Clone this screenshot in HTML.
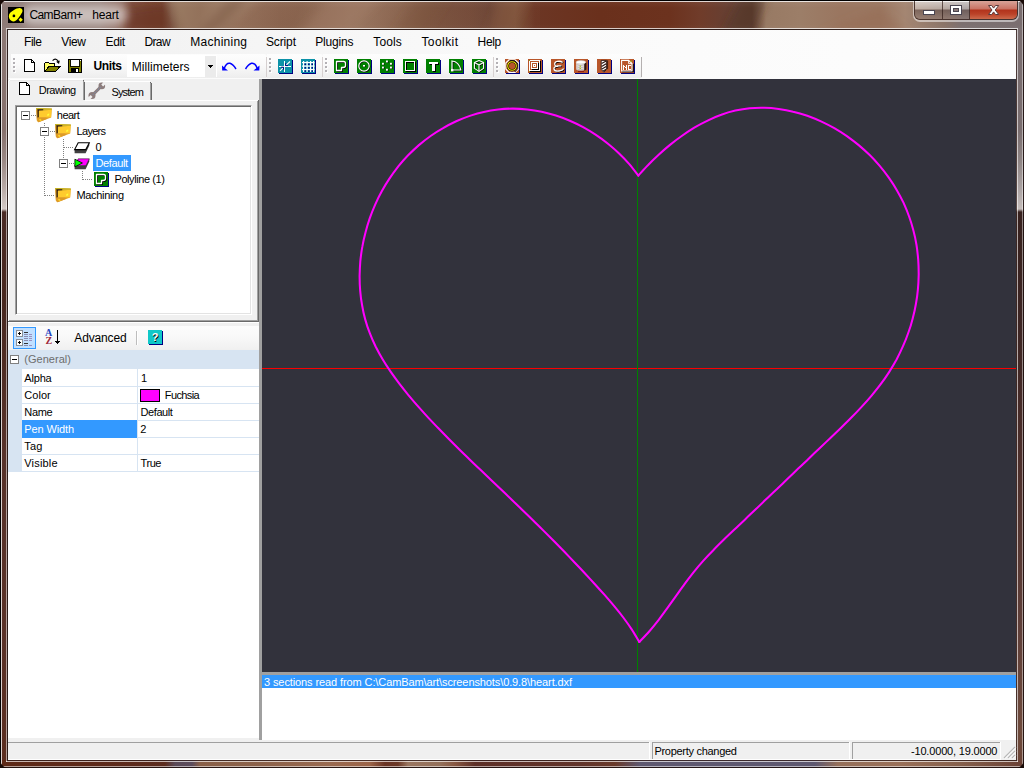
<!DOCTYPE html>
<html><head><meta charset="utf-8"><title>CamBam+ heart</title>
<style>
html,body{margin:0;padding:0;}
body{width:1024px;height:768px;overflow:hidden;background:#000;position:relative;font-family:'Liberation Sans',sans-serif;}
.a{position:absolute;}
.t{position:absolute;white-space:pre;font-family:'Liberation Sans',sans-serif;}
svg{position:absolute;overflow:visible;}

</style></head><body>
<div class="a" style="left:0px;top:0px;width:1024px;height:30px;background:linear-gradient(90deg,#8e7a76 0px,#917d78 20px,#937d76 100px,#8e6a5e 122px,#7a4a3a 132px,#74412e 150px,#72402c 162px,#886450 172px,#8e6c54 180px,#86604a 200px,#8f6b55 215px,#8c6650 280px,#94705a 350px,#8a644e 400px,#7c5440 440px,#744a38 470px,#6a4232 490px,#7a5038 515px,#6c3624 535px,#6a301c 600px,#6c321e 670px,#703c2a 700px,#644034 735px,#5e3c30 752px,#987a64 766px,#9c7e68 800px,#9a7660 840px,#9a7660 880px,#a48672 905px,#8a7468 945px,#7c7070 962px,#7a6e70 1024px);"></div>
<div class="a" style="left:160px;top:0px;width:380px;height:30px;background:linear-gradient(115deg,rgba(255,235,220,0) 0,rgba(60,20,10,.10) 40px,rgba(255,235,220,.05) 80px,rgba(60,20,10,.06) 130px,rgba(255,235,220,.06) 190px,rgba(60,20,10,.05) 250px,rgba(255,235,220,.04) 310px,rgba(0,0,0,0) 380px);"></div>
<div class="a" style="left:2px;top:2px;width:1020px;height:26px;overflow:hidden"><svg style="left:-2px;top:-2px" width="1024" height="30" viewBox="0 0 1024 30"><defs><filter id="tb" x="-10%" y="-50%" width="120%" height="200%"><feGaussianBlur stdDeviation="4"/></filter></defs><g filter="url(#tb)"><path d="M168 -4H262L218 34H182Z" fill="#a4866e" opacity=".55"/><path d="M122 12L166 6L176 34H124Z" fill="#6a3222" opacity=".5"/><path d="M196 34L232 -4H252L214 34Z" fill="#74503c" opacity=".4"/><path d="M330 -4H384L344 34H300Z" fill="#a27e66" opacity=".4"/><path d="M420 -4H450L425 34H392Z" fill="#7a5440" opacity=".35"/><path d="M500 -4H530L512 34H486Z" fill="#86583e" opacity=".4"/><path d="M742 -4H768L752 34H722Z" fill="#4e3028" opacity=".45"/><path d="M820 34L880 8L910 34Z" fill="#966a52" opacity=".45"/></g></svg></div>
<div class="a" style="left:22px;top:5px;width:106px;height:20px;border-radius:10px;background:rgba(255,255,255,.50);filter:blur(4px)"></div>
<div class="a" style="left:0px;top:0px;width:1024px;height:30px;background:linear-gradient(180deg,rgba(255,255,255,.06) 0,rgba(255,255,255,0) 8px,rgba(0,0,0,0) 24px,rgba(255,255,255,.03) 30px);"></div>
<div class="a" style="left:0px;top:30px;width:8px;height:738px;background:linear-gradient(180deg,#8c7874 0,#86706c 100px,#9a8884 130px,#b8aaa6 158px,#d4cac6 179px,#4a2a24 182px,#48281f 270px,#57322a 420px,#5a3228 600px,#5c2e20 738px);"></div>
<div class="a" style="left:1016px;top:30px;width:8px;height:738px;background:linear-gradient(180deg,#7a6e70 0,#7a6e70 100px,#8e8484 130px,#aaa2a2 158px,#c4bcba 179px,#38221f 182px,#3e2624 300px,#4e302c 440px,#60403a 600px,#6e4a3c 700px,#6a4436 738px);"></div>
<div class="a" style="left:0px;top:760px;width:1024px;height:8px;background:linear-gradient(90deg,#5e2a18 0,#5e2a1a 100px,#5c2c1e 165px,#5a4a58 175px,#5c4c5c 192px,#8a6048 200px,#8c624a 260px,#9a6a50 330px,#9c6448 370px,#6a3424 385px,#6c3826 398px,#9a7660 408px,#94705a 440px,#885842 455px,#5e3028 475px,#62342a 580px,#6a3a2a 615px,#5e5870 640px,#5e5870 815px,#96705a 838px,#9a7058 900px,#86604c 960px,#6a4034 1024px);"></div>
<div class="a" style="left:0px;top:0px;width:1024px;height:1px;background:#000;"></div>
<div class="a" style="left:1px;top:1px;width:1022px;height:1px;background:rgba(255,255,255,.78);"></div>
<div class="a" style="left:0px;top:0px;width:1px;height:768px;background:#000;"></div>
<div class="a" style="left:1px;top:1px;width:1px;height:766px;background:rgba(255,255,255,.78);"></div>
<div class="a" style="left:1023px;top:0px;width:1px;height:768px;background:rgba(30,16,14,.9);"></div>
<div class="a" style="left:1022px;top:1px;width:1px;height:766px;background:rgba(255,255,255,.45);"></div>
<div class="a" style="left:0px;top:767px;width:1024px;height:1px;background:rgba(30,16,14,.9);"></div>
<div class="a" style="left:1px;top:766px;width:1022px;height:1px;background:rgba(255,255,255,.55);"></div>
<div class="a" style="left:6px;top:28px;width:1012px;height:1px;background:rgba(255,255,255,.75);"></div>
<div class="a" style="left:7px;top:29px;width:1010px;height:1px;background:rgba(40,26,24,.92);"></div>
<div class="a" style="left:6px;top:29px;width:1px;height:733px;background:rgba(255,255,255,.54);"></div>
<div class="a" style="left:7px;top:30px;width:1px;height:731px;background:rgba(40,26,24,.92);"></div>
<div class="a" style="left:1017px;top:29px;width:1px;height:733px;background:rgba(255,255,255,.6);"></div>
<div class="a" style="left:1016px;top:30px;width:1px;height:731px;background:rgba(60,40,36,.75);"></div>
<div class="a" style="left:6px;top:761px;width:1012px;height:1px;background:rgba(255,255,255,.65);"></div>
<div class="a" style="left:7px;top:760px;width:1010px;height:1px;background:rgba(50,30,28,.8);"></div>
<svg class="a" style="left:0;top:0" width="1024" height="768" viewBox="0 0 1024 768"><path d="M0 0H7Q2 1 0 7Z M1024 0H1017Q1022 1 1024 7Z M0 768H7Q2 767 0 761Z M1024 768H1017Q1022 767 1024 761Z" fill="#180a06"/></svg>
<div class="a" style="left:8px;top:30px;width:1008px;height:730px;background:#f0f0f0;"></div>
<div class="a" style="left:8px;top:30px;width:1008px;height:49px;background:linear-gradient(90deg,#efefef 0,#f4f4f4 200px,#fafafa 520px,#fdfdfd 1008px);"></div>
<div class="a" style="left:914px;top:1px;width:104px;height:19px;border-radius:0 0 6px 6px;border:1px solid rgba(50,30,26,.75);border-top:none;box-sizing:border-box;box-shadow:0 1px 0 1px rgba(255,255,255,.5);overflow:hidden">
<div class="a" style="left:0;top:0;width:27px;height:18px;background:linear-gradient(180deg,rgba(255,255,255,.60) 0,rgba(255,255,255,.36) 8px,rgba(100,80,76,.55) 9px,rgba(150,128,120,.5) 18px);border-right:1px solid rgba(50,30,26,.7)"></div>
<div class="a" style="left:28px;top:0;width:26px;height:18px;background:linear-gradient(180deg,rgba(255,255,255,.60) 0,rgba(255,255,255,.36) 8px,rgba(100,80,76,.55) 9px,rgba(150,128,120,.5) 18px);border-right:1px solid rgba(50,30,26,.7)"></div>
<div class="a" style="left:55px;top:0;width:48px;height:18px;background:linear-gradient(180deg,#d8a398 0,#c97263 8px,#b2331c 9px,#bb4228 13px,#cc6a4c 18px)"></div>
</div>
<svg class="a" style="left:914px;top:0" width="104" height="20" viewBox="0 0 104 20" shape-rendering="crispEdges">
<rect x="9.5" y="10.5" width="11" height="4" fill="#fff" stroke="#4a4652" stroke-width="1"/>
<rect x="36.5" y="5.5" width="11" height="9" fill="#fff" stroke="#4a4652" stroke-width="1"/>
<rect x="39.5" y="8.5" width="5" height="3" fill="#8a7a78" stroke="#4a4652" stroke-width="1"/>
<g shape-rendering="auto"><path d="M74.5 5.5h3.2l1.9 2.6 1.9-2.6h3.2l-3.5 4.5 3.5 4.5h-3.2l-1.9-2.6-1.9 2.6h-3.2l3.5-4.5z" fill="#fff" stroke="#5a3a3a" stroke-width="1" stroke-linejoin="round"/></g>
</svg>
<div class="a" style="left:11px;top:54px;width:256px;height:25px;background:linear-gradient(180deg,#fdfdfd 0,#fafafa 10px,#f1f1f1 20px,#ececec 25px);border-radius:0 3px 3px 0;"></div>
<div class="a" style="left:266px;top:57px;width:1px;height:20px;background:#d6d0d0;"></div>
<div class="a" style="left:14px;top:59px;width:2px;height:2px;background:#fff;"></div>
<div class="a" style="left:13px;top:58px;width:2px;height:2px;background:#b3b0b4;"></div>
<div class="a" style="left:14px;top:63px;width:2px;height:2px;background:#fff;"></div>
<div class="a" style="left:13px;top:62px;width:2px;height:2px;background:#b3b0b4;"></div>
<div class="a" style="left:14px;top:67px;width:2px;height:2px;background:#fff;"></div>
<div class="a" style="left:13px;top:66px;width:2px;height:2px;background:#b3b0b4;"></div>
<div class="a" style="left:14px;top:71px;width:2px;height:2px;background:#fff;"></div>
<div class="a" style="left:13px;top:70px;width:2px;height:2px;background:#b3b0b4;"></div>
<div class="a" style="left:267px;top:54px;width:56px;height:25px;background:linear-gradient(180deg,#fdfdfd 0,#fafafa 10px,#f1f1f1 20px,#ececec 25px);border-radius:0 3px 3px 0;"></div>
<div class="a" style="left:322px;top:57px;width:1px;height:20px;background:#d6d0d0;"></div>
<div class="a" style="left:270px;top:59px;width:2px;height:2px;background:#fff;"></div>
<div class="a" style="left:269px;top:58px;width:2px;height:2px;background:#b3b0b4;"></div>
<div class="a" style="left:270px;top:63px;width:2px;height:2px;background:#fff;"></div>
<div class="a" style="left:269px;top:62px;width:2px;height:2px;background:#b3b0b4;"></div>
<div class="a" style="left:270px;top:67px;width:2px;height:2px;background:#fff;"></div>
<div class="a" style="left:269px;top:66px;width:2px;height:2px;background:#b3b0b4;"></div>
<div class="a" style="left:270px;top:71px;width:2px;height:2px;background:#fff;"></div>
<div class="a" style="left:269px;top:70px;width:2px;height:2px;background:#b3b0b4;"></div>
<div class="a" style="left:323px;top:54px;width:171px;height:25px;background:linear-gradient(180deg,#fdfdfd 0,#fafafa 10px,#f1f1f1 20px,#ececec 25px);border-radius:0 3px 3px 0;"></div>
<div class="a" style="left:493px;top:57px;width:1px;height:20px;background:#d6d0d0;"></div>
<div class="a" style="left:326px;top:59px;width:2px;height:2px;background:#fff;"></div>
<div class="a" style="left:325px;top:58px;width:2px;height:2px;background:#b3b0b4;"></div>
<div class="a" style="left:326px;top:63px;width:2px;height:2px;background:#fff;"></div>
<div class="a" style="left:325px;top:62px;width:2px;height:2px;background:#b3b0b4;"></div>
<div class="a" style="left:326px;top:67px;width:2px;height:2px;background:#fff;"></div>
<div class="a" style="left:325px;top:66px;width:2px;height:2px;background:#b3b0b4;"></div>
<div class="a" style="left:326px;top:71px;width:2px;height:2px;background:#fff;"></div>
<div class="a" style="left:325px;top:70px;width:2px;height:2px;background:#b3b0b4;"></div>
<div class="a" style="left:494px;top:54px;width:148px;height:25px;background:linear-gradient(180deg,#fdfdfd 0,#fafafa 10px,#f1f1f1 20px,#ececec 25px);border-radius:0 3px 3px 0;"></div>
<div class="a" style="left:641px;top:57px;width:1px;height:20px;background:#d6d0d0;"></div>
<div class="a" style="left:497px;top:59px;width:2px;height:2px;background:#fff;"></div>
<div class="a" style="left:496px;top:58px;width:2px;height:2px;background:#b3b0b4;"></div>
<div class="a" style="left:497px;top:63px;width:2px;height:2px;background:#fff;"></div>
<div class="a" style="left:496px;top:62px;width:2px;height:2px;background:#b3b0b4;"></div>
<div class="a" style="left:497px;top:67px;width:2px;height:2px;background:#fff;"></div>
<div class="a" style="left:496px;top:66px;width:2px;height:2px;background:#b3b0b4;"></div>
<div class="a" style="left:497px;top:71px;width:2px;height:2px;background:#fff;"></div>
<div class="a" style="left:496px;top:70px;width:2px;height:2px;background:#b3b0b4;"></div>
<div class="a" style="left:641px;top:57px;width:1px;height:20px;background:#b4b0b0;"></div>
<div class="a" style="left:8px;top:78px;width:1008px;height:1px;background:#fbfbfb;"></div>
<div class="a" style="left:127px;top:55px;width:90px;height:22px;background:#fff;"></div>
<div class="a" style="left:205px;top:56px;width:11px;height:21px;background:#ebebeb;"></div>
<svg style="left:208px;top:65px" width="5" height="3" shape-rendering="crispEdges"><path d="M0 0h5v1h-1v1h-1v1h-1v-1h-1v-1h-1z" fill="#000"/></svg>
<svg style="left:24px;top:59px" width="12" height="14" viewBox="0 0 12 14" shape-rendering="crispEdges"><path d="M0.5 0.5H7.5L10.5 3.5V12.5H0.5Z" fill="#fff" stroke="#000"/><path d="M7.5 0.5V3.5H10.5" fill="none" stroke="#000"/></svg>
<svg style="left:44px;top:58px" width="17" height="15" viewBox="0 0 17 15" shape-rendering="crispEdges"><path d="M0.5 13.5V5.5L1.5 4.5H4.5L5.5 5.5H10.5V8.5" fill="#ffff66" stroke="#000"/><path d="M0.5 13.5L5 8.5H16L11.5 13.5Z" fill="#808000" stroke="#000" stroke-linejoin="miter"/><g shape-rendering="auto"><path d="M8.6 2.6Q10.4 0.6 12.4 1.4T14.3 4.4" fill="none" stroke="#000" stroke-width="1.1"/><path d="M12.2 3.8L15.8 2.4L15 6Z" fill="#000"/></g></svg>
<svg style="left:68px;top:59px" width="14" height="14" viewBox="0 0 14 14" shape-rendering="crispEdges"><rect x="0.5" y="0.5" width="13" height="13" fill="#808000" stroke="#000"/><rect x="3" y="1" width="8" height="6" fill="#fff"/><rect x="2.5" y="0.5" width="9" height="7" fill="none" stroke="#000" stroke-opacity=".85"/><rect x="3" y="9" width="8" height="5" fill="#000"/><rect x="8" y="10" width="2" height="3" fill="#fff"/><rect x="12" y="1" width="1" height="1" fill="#fff"/></svg>
<svg style="left:222px;top:61.5px" width="15" height="9" viewBox="0 0 15 9"><g shape-rendering="auto"><path d="M2.2 6.6Q4.2 0.6 8 1.3Q11 2.2 14 7" fill="none" stroke="#0000ff" stroke-width="1.45"/><path d="M0 3.4L0.2 8.4H6L3.4 6.4Z" fill="#0000ff"/></g></svg>
<svg style="left:245px;top:61.5px" width="15" height="9" viewBox="0 0 15 9"><g transform="translate(14.5,0) scale(-1,1)"><g shape-rendering="auto"><path d="M2.2 6.6Q4.2 0.6 8 1.3Q11 2.2 14 7" fill="none" stroke="#0000ff" stroke-width="1.45"/><path d="M0 3.4L0.2 8.4H6L3.4 6.4Z" fill="#0000ff"/></g></g></svg>
<svg style="left:278px;top:59px" width="16" height="16" viewBox="0 0 16 16" shape-rendering="crispEdges"><rect x="1" y="1" width="14" height="14" fill="#000080"/><rect x="0" y="0" width="14" height="14" fill="#0c92a8"/><rect x="6" y="2" width="1" height="11" fill="#fff"/><rect x="1" y="7" width="12" height="1" fill="#fff"/><g shape-rendering="auto"><path d="M12 2.5L8.2 6.2" stroke="#fff" stroke-width="1.1"/><path d="M2 11.8L5 8.8" stroke="#fff" stroke-width="1.1"/><path d="M7.6 4.2V6.6H10" stroke="#000080" stroke-width="1" fill="none"/><path d="M3.2 8.2H5.6V10.6" stroke="#000080" stroke-width="1" fill="none"/></g></svg>
<svg style="left:301px;top:59px" width="16" height="16" viewBox="0 0 16 16" shape-rendering="crispEdges"><rect x="1" y="1" width="14" height="14" fill="#000080"/><rect x="0" y="0" width="14" height="14" fill="#0c92a8"/><rect x="2" y="2" width="1.2" height="11" fill="#fff" shape-rendering="auto"/><rect x="5.5" y="2" width="1.2" height="11" fill="#fff" shape-rendering="auto"/><rect x="9" y="2" width="1.2" height="11" fill="#fff" shape-rendering="auto"/><rect x="12" y="2" width="1.2" height="11" fill="#fff" shape-rendering="auto"/><rect x="1" y="3" width="12.5" height="1.2" fill="#fff" shape-rendering="auto"/><rect x="1" y="6.5" width="12.5" height="1.2" fill="#fff" shape-rendering="auto"/><rect x="1" y="10" width="12.5" height="1.2" fill="#fff" shape-rendering="auto"/><rect x="3.6" y="4.6" width="1.4" height="1.4" fill="#000080" shape-rendering="auto"/><rect x="3.6" y="8.1" width="1.4" height="1.4" fill="#000080" shape-rendering="auto"/><rect x="3.6" y="11.4" width="1.4" height="1.4" fill="#000080" shape-rendering="auto"/><rect x="7.1" y="4.6" width="1.4" height="1.4" fill="#000080" shape-rendering="auto"/><rect x="7.1" y="8.1" width="1.4" height="1.4" fill="#000080" shape-rendering="auto"/><rect x="7.1" y="11.4" width="1.4" height="1.4" fill="#000080" shape-rendering="auto"/><rect x="10.6" y="4.6" width="1.4" height="1.4" fill="#000080" shape-rendering="auto"/><rect x="10.6" y="8.1" width="1.4" height="1.4" fill="#000080" shape-rendering="auto"/><rect x="10.6" y="11.4" width="1.4" height="1.4" fill="#000080" shape-rendering="auto"/></svg>
<svg style="left:334px;top:59px" width="16" height="16" viewBox="0 0 16 16" shape-rendering="crispEdges"><rect x="1" y="1" width="14" height="14" fill="#000080"/><rect x="0" y="0" width="14" height="14" fill="#008000"/><g shape-rendering="auto"><g transform="translate(.8,.8)"><path d="M2.5 2.5H9.5Q11.5 2.5 11.5 4.5V6.5Q11.5 8.5 9 8.5H7.5V11.5H2.5Z" fill="none" stroke="#000" stroke-width="1.3" stroke-linejoin="round"/></g><path d="M2.5 2.5H9.5Q11.5 2.5 11.5 4.5V6.5Q11.5 8.5 9 8.5H7.5V11.5H2.5Z" fill="none" stroke="#fff" stroke-width="1.3" stroke-linejoin="round"/></g></svg>
<svg style="left:357px;top:59px" width="16" height="16" viewBox="0 0 16 16" shape-rendering="crispEdges"><rect x="1" y="1" width="14" height="14" fill="#000080"/><rect x="0" y="0" width="14" height="14" fill="#008000"/><g shape-rendering="auto"><circle cx="7.6" cy="7.6" r="5.2" fill="none" stroke="#000" stroke-width="1.1"/><circle cx="7" cy="7" r="5.2" fill="none" stroke="#fff" stroke-width="1.2"/><rect x="6.4" y="6.4" width="2" height="1.6" fill="#000"/><rect x="6" y="6" width="2" height="1.6" fill="#fff"/></g></svg>
<svg style="left:380px;top:59px" width="16" height="16" viewBox="0 0 16 16" shape-rendering="crispEdges"><rect x="1" y="1" width="14" height="14" fill="#000080"/><rect x="0" y="0" width="14" height="14" fill="#008000"/><g shape-rendering="auto"><rect x="6.5" y="2.0" width="1.9" height="1.9" fill="#000"/><rect x="6" y="1.5" width="1.9" height="1.9" fill="#fff"/><rect x="2.5" y="4.3" width="1.9" height="1.9" fill="#000"/><rect x="2" y="3.8" width="1.9" height="1.9" fill="#fff"/><rect x="10.5" y="4.3" width="1.9" height="1.9" fill="#000"/><rect x="10" y="3.8" width="1.9" height="1.9" fill="#fff"/><rect x="2.5" y="8.1" width="1.9" height="1.9" fill="#000"/><rect x="2" y="7.6" width="1.9" height="1.9" fill="#fff"/><rect x="10.5" y="8.1" width="1.9" height="1.9" fill="#000"/><rect x="10" y="7.6" width="1.9" height="1.9" fill="#fff"/><rect x="6.5" y="10.3" width="1.9" height="1.9" fill="#000"/><rect x="6" y="9.8" width="1.9" height="1.9" fill="#fff"/></g></svg>
<svg style="left:403px;top:59px" width="16" height="16" viewBox="0 0 16 16" shape-rendering="crispEdges"><rect x="1" y="1" width="14" height="14" fill="#000080"/><rect x="0" y="0" width="14" height="14" fill="#008000"/><rect x="3.5" y="3.5" width="9" height="9" fill="none" stroke="#000"/><rect x="2.5" y="2.5" width="9" height="9" fill="none" stroke="#fff"/></svg>
<svg style="left:426px;top:59px" width="16" height="16" viewBox="0 0 16 16" shape-rendering="crispEdges"><rect x="1" y="1" width="14" height="14" fill="#000080"/><rect x="0" y="0" width="14" height="14" fill="#008000"/><path d="M4 4h9v2h-3v7h-3v-7h-3z" fill="#000"/><path d="M3 3h9v2h-3v7h-3v-7h-3z" fill="#fff"/></svg>
<svg style="left:449px;top:59px" width="16" height="16" viewBox="0 0 16 16" shape-rendering="crispEdges"><rect x="1" y="1" width="14" height="14" fill="#000080"/><rect x="0" y="0" width="14" height="14" fill="#008000"/><g shape-rendering="auto"><path d="M3.8 11.8V2.8Q10.8 3.4 12.6 11.8Z" fill="none" stroke="#000" stroke-width="1.1"/><path d="M3 11V2Q10 2.6 11.8 11Z" fill="none" stroke="#fff" stroke-width="1.2"/><rect x="2" y="10" width="2.4" height="2.4" fill="#fff"/></g></svg>
<svg style="left:472px;top:59px" width="16" height="16" viewBox="0 0 16 16" shape-rendering="crispEdges"><rect x="1" y="1" width="14" height="14" fill="#000080"/><rect x="0" y="0" width="14" height="14" fill="#008000"/><g shape-rendering="auto" fill="none" stroke-linejoin="round"><g transform="translate(.7,.7)" stroke="#000" stroke-width="1"><path d="M7 1.6L11.6 3.6V9.4L7 12.4L2.4 9.4V3.6Z"/><path d="M2.4 3.6L7 6L11.6 3.6M7 6V12.4"/></g><g stroke="#fff" stroke-width="1.1"><path d="M7 1.6L11.6 3.6V9.4L7 12.4L2.4 9.4V3.6Z"/><path d="M2.4 3.6L7 6L11.6 3.6M7 6V12.4"/></g></g></svg>
<svg style="left:505px;top:59px" width="16" height="16" viewBox="0 0 16 16" shape-rendering="crispEdges"><rect x="1" y="1" width="14" height="14" fill="#000080"/><rect x="0" y="0" width="14" height="14" fill="#b8562a"/><g shape-rendering="auto"><path d="M4 0.8H10L13.4 4V10L10 13.4H4L0.8 10V4Z" fill="none" stroke="#fff" stroke-width="1.2"/><path d="M4.6 1.6H9.6L12.8 4.6V9.6L9.8 13" fill="none" stroke="#000" stroke-width=".9"/><circle cx="7" cy="7" r="4.3" fill="#b8562a" stroke="#000" stroke-width="2.2"/><circle cx="7" cy="7" r="4.3" fill="none" stroke="#ffee00" stroke-width="1.1"/></g></svg>
<svg style="left:528px;top:59px" width="16" height="16" viewBox="0 0 16 16" shape-rendering="crispEdges"><rect x="1" y="1" width="14" height="14" fill="#000080"/><rect x="0" y="0" width="14" height="14" fill="#b8562a"/><rect x="1" y="1" width="11" height="1" fill="#fff"/><rect x="1" y="11" width="11" height="1" fill="#fff"/><rect x="1" y="1" width="1" height="11" fill="#fff"/><rect x="11" y="1" width="1" height="11" fill="#fff"/><rect x="12" y="2" width="1" height="11" fill="#000"/><rect x="2" y="12" width="11" height="1" fill="#000"/><rect x="3" y="3" width="7" height="1" fill="#fff"/><rect x="3" y="9" width="7" height="1" fill="#fff"/><rect x="3" y="3" width="1" height="7" fill="#fff"/><rect x="9" y="3" width="1" height="7" fill="#fff"/><rect x="10" y="4" width="1" height="7" fill="#000"/><rect x="4" y="10" width="7" height="1" fill="#000"/><rect x="5" y="5" width="3" height="1" fill="#fff"/><rect x="5" y="7" width="3" height="1" fill="#fff"/><rect x="5" y="5" width="1" height="3" fill="#fff"/><rect x="7" y="5" width="1" height="3" fill="#fff"/><rect x="1" y="1" width="1" height="1" fill="#8a9a20"/><rect x="1" y="12" width="1" height="1" fill="#8a9a20"/></svg>
<svg style="left:551px;top:59px" width="16" height="16" viewBox="0 0 16 16" shape-rendering="crispEdges"><rect x="1" y="1" width="14" height="14" fill="#000080"/><rect x="0" y="0" width="14" height="14" fill="#b8562a"/><g shape-rendering="auto" fill="none"><path d="M11.6 3.4Q9.6 1.8 6.4 2.4T3.8 5.6T7.4 6.8H10.4M7 6.8Q2.4 7.4 3 10T8 12T12.4 9.6" stroke="#000" stroke-width="1.3" transform="translate(.7,.7)"/><path d="M11.6 3.4Q9.6 1.8 6.4 2.4T3.8 5.6T7.4 6.8H10.4M7 6.8Q2.4 7.4 3 10T8 12T12.4 9.6" stroke="#fff" stroke-width="1.3"/></g></svg>
<svg style="left:574px;top:59px" width="16" height="16" viewBox="0 0 16 16" shape-rendering="crispEdges"><rect x="1" y="1" width="14" height="14" fill="#000080"/><rect x="0" y="0" width="14" height="14" fill="#b8562a"/><g shape-rendering="auto"><path d="M2.2 3.2V10.4Q6.6 13.4 11.6 10.4V3.2Z" fill="#e4e0e0"/><path d="M10.2 3.4H12.4V10.4Q11.4 11.4 10.2 11.8Z" fill="#2a1410"/><ellipse cx="6.9" cy="3.2" rx="4.8" ry="1.7" fill="#fff" stroke="#c8c4c4" stroke-width=".6"/><path d="M2.6 5.6Q6.8 7.6 10 5.8M2.6 7.8Q6.8 9.8 10 8M2.6 9.8Q6.8 11.8 10 10" stroke="#b0a8a8" stroke-width=".7" fill="none"/><rect x="5.6" y="6.6" width="1.4" height="1.2" fill="#b0c020"/><rect x="5.6" y="8.8" width="1.4" height="1.2" fill="#b0c020"/><path d="M4 12.4H10" stroke="#8a1c10" stroke-width="1.4"/></g></svg>
<svg style="left:597px;top:59px" width="16" height="16" viewBox="0 0 16 16" shape-rendering="crispEdges"><rect x="1" y="1" width="14" height="14" fill="#000080"/><rect x="0" y="0" width="14" height="14" fill="#b8562a"/><g shape-rendering="auto"><path d="M4.2 1.4H9.6V10.4L6.9 13.2L4.2 10.4Z" fill="#fff" stroke="#2a1410" stroke-width=".9"/><path d="M4.6 4.6L9.2 2M4.6 7.4L9.2 4.8M4.6 10.2L9.2 7.6M6.2 12L9.2 10.2" stroke="#2a1410" stroke-width="1.2"/><path d="M10.6 1.4V10" stroke="#3a1c10" stroke-width="1"/></g></svg>
<svg style="left:620px;top:59px" width="16" height="16" viewBox="0 0 16 16" shape-rendering="crispEdges"><rect x="1" y="1" width="14" height="14" fill="#000080"/><rect x="0" y="0" width="14" height="14" fill="#b8562a"/><g shape-rendering="auto"><path d="M2.2 12.6H13.2V4.8" stroke="#000" stroke-width="1.2" fill="none"/><path d="M1.6 1.4H8.6L12 4.6V12H1.6Z" fill="none" stroke="#fff" stroke-width="1.1"/><path d="M8.6 1.4V4.6H12" fill="none" stroke="#fff" stroke-width=".9"/><rect x="10.4" y="1.6" width="1.4" height="1.4" fill="#a0b020"/></g><path d="M3 6h1v1h1v1h1v-2h1v5h-1v-2h-1v-1h-1v3h-1z" fill="#fff"/><path d="M8 6h3v1h-2v3h2v1h-3z" fill="#fff"/></svg>
<div class="a" style="left:8px;top:100px;width:251px;height:222px;background:#f0f0f0;"></div>
<div class="a" style="left:8px;top:100px;width:250px;height:1px;background:#fff;"></div>
<div class="a" style="left:8px;top:100px;width:1px;height:221px;background:#fff;"></div>
<div class="a" style="left:257px;top:101px;width:1px;height:220px;background:#a0a0a0;"></div>
<div class="a" style="left:258px;top:100px;width:1px;height:222px;background:#696969;"></div>
<div class="a" style="left:9px;top:320px;width:249px;height:1px;background:#a0a0a0;"></div>
<div class="a" style="left:8px;top:321px;width:251px;height:1px;background:#696969;"></div>
<div class="a" style="left:85px;top:81px;width:67px;height:19px;background:#f0f0f0;"></div>
<div class="a" style="left:85px;top:81px;width:65px;height:1px;background:#fff;"></div>
<div class="a" style="left:150px;top:82px;width:1px;height:18px;background:#a0a0a0;"></div>
<div class="a" style="left:151px;top:83px;width:1px;height:17px;background:#696969;"></div>
<div class="a" style="left:150px;top:82px;width:1px;height:1px;background:#696969;"></div>
<div class="a" style="left:8px;top:79px;width:77px;height:22px;background:#f0f0f0;"></div>
<div class="a" style="left:10px;top:79px;width:73px;height:1px;background:#fff;"></div>
<div class="a" style="left:8px;top:81px;width:1px;height:20px;background:#fff;"></div>
<div class="a" style="left:9px;top:80px;width:1px;height:1px;background:#fff;"></div>
<div class="a" style="left:10px;top:80px;width:73px;height:1px;background:#e9e9e9;"></div>
<div class="a" style="left:83px;top:81px;width:1px;height:19px;background:#a0a0a0;"></div>
<div class="a" style="left:84px;top:82px;width:1px;height:18px;background:#696969;"></div>
<div class="a" style="left:83px;top:80px;width:1px;height:1px;background:#696969;"></div>
<svg style="left:19px;top:82px" width="12" height="14" viewBox="0 0 12 14" shape-rendering="crispEdges"><path d="M0.5 0.5H7.5L10.5 3.5V12.5H0.5Z" fill="#fff" stroke="#000"/><path d="M7.5 0.5V3.5H10.5" fill="none" stroke="#000"/></svg>
<svg style="left:88px;top:83px" width="17" height="16" viewBox="0 0 17 16"><g shape-rendering="auto"><path d="M4.2 12.4L13.6 3" stroke="#8c7c7c" stroke-width="3" stroke-linecap="round"/><circle cx="4" cy="12.6" r="3.5" fill="#8c7c7c"/><circle cx="13.8" cy="2.9" r="3.3" fill="#8c7c7c"/><path d="M3.6 13L0.4 16.2" stroke="#f0f0f0" stroke-width="2.6"/><path d="M14.2 2.5L17.2 -0.5" stroke="#f0f0f0" stroke-width="2.6"/><path d="M5 11.6L12.6 4" stroke="#6c98c8" stroke-width="1" stroke-dasharray="1 1.4"/></g></svg>
<div class="a" style="left:15px;top:105px;width:237px;height:210px;background:#fff;box-sizing:border-box;border:1px solid #a0a0a0;border-right-color:#fff;border-bottom-color:#fff;"></div>
<div class="a" style="left:16px;top:106px;width:235px;height:1px;background:#696969;"></div>
<div class="a" style="left:16px;top:106px;width:1px;height:208px;background:#696969;"></div>
<div class="a" style="left:17px;top:313px;width:234px;height:1px;background:#e3e3e3;"></div>
<div class="a" style="left:250px;top:107px;width:1px;height:207px;background:#e3e3e3;"></div>
<div class="a" style="left:31px;top:115px;width:5px;height:1px;background:repeating-linear-gradient(90deg,#808080 0,#808080 1px,transparent 1px,transparent 2px)"></div>
<div class="a" style="left:44px;top:123px;width:1px;height:73px;background:repeating-linear-gradient(180deg,#808080 0,#808080 1px,transparent 1px,transparent 2px)"></div>
<div class="a" style="left:50px;top:131px;width:5px;height:1px;background:repeating-linear-gradient(90deg,#808080 0,#808080 1px,transparent 1px,transparent 2px)"></div>
<div class="a" style="left:45px;top:195px;width:10px;height:1px;background:repeating-linear-gradient(90deg,#808080 0,#808080 1px,transparent 1px,transparent 2px)"></div>
<div class="a" style="left:63px;top:139px;width:1px;height:21px;background:repeating-linear-gradient(180deg,#808080 0,#808080 1px,transparent 1px,transparent 2px)"></div>
<div class="a" style="left:64px;top:147px;width:10px;height:1px;background:repeating-linear-gradient(90deg,#808080 0,#808080 1px,transparent 1px,transparent 2px)"></div>
<div class="a" style="left:69px;top:163px;width:5px;height:1px;background:repeating-linear-gradient(90deg,#808080 0,#808080 1px,transparent 1px,transparent 2px)"></div>
<div class="a" style="left:82px;top:171px;width:1px;height:9px;background:repeating-linear-gradient(180deg,#808080 0,#808080 1px,transparent 1px,transparent 2px)"></div>
<div class="a" style="left:83px;top:179px;width:10px;height:1px;background:repeating-linear-gradient(90deg,#808080 0,#808080 1px,transparent 1px,transparent 2px)"></div>
<div class="a" style="left:21px;top:111px;width:9px;height:9px;background:#fff;box-sizing:border-box;border:1px solid #808080;"></div>
<div class="a" style="left:23px;top:115px;width:5px;height:1px;background:#000;"></div>
<div class="a" style="left:40px;top:127px;width:9px;height:9px;background:#fff;box-sizing:border-box;border:1px solid #808080;"></div>
<div class="a" style="left:42px;top:131px;width:5px;height:1px;background:#000;"></div>
<div class="a" style="left:59px;top:159px;width:9px;height:9px;background:#fff;box-sizing:border-box;border:1px solid #808080;"></div>
<div class="a" style="left:61px;top:163px;width:5px;height:1px;background:#000;"></div>
<svg style="left:36px;top:107px" width="16" height="16" viewBox="0 0 16 16"><g shape-rendering="auto"><path d="M0 1L15.8 1.4L15.2 10.4L2.4 15.3L0.9 14Z" fill="#e4a42a"/><path d="M0 1L15.8 1.4V2.8L0.4 2.6Z" fill="#c0b424"/><path d="M1.3 2.2H7.4V3.7H2.9V10.4H1.3Z" fill="#2a1a10"/><path d="M0.6 3L1.3 3V12L0.9 13Z" fill="#c88a20"/><path d="M2.9 3.7L15.6 2.7L15 10.3L2.9 10.6Z" fill="#ffcb2e"/><path d="M7.4 2.4L15.7 2V2.8L7.4 3.6Z" fill="#d0b428"/><path d="M2.2 10.6L10 10.4L11.4 11.8L2.6 15.2L1.4 13.8Z" fill="#dd9a28"/><path d="M3 12.4L4 11.6L5 12.6L5.8 13.2L4.6 14L3.6 13.4Z" fill="#ffd820"/><path d="M11.2 7.6L13.2 6.2V8.4L11 8.7Z" fill="#ffff38"/></g></svg>
<svg style="left:55px;top:123px" width="16" height="16" viewBox="0 0 16 16"><g shape-rendering="auto"><path d="M0 1L15.8 1.4L15.2 10.4L2.4 15.3L0.9 14Z" fill="#e4a42a"/><path d="M0 1L15.8 1.4V2.8L0.4 2.6Z" fill="#c0b424"/><path d="M1.3 2.2H7.4V3.7H2.9V10.4H1.3Z" fill="#2a1a10"/><path d="M0.6 3L1.3 3V12L0.9 13Z" fill="#c88a20"/><path d="M2.9 3.7L15.6 2.7L15 10.3L2.9 10.6Z" fill="#ffcb2e"/><path d="M7.4 2.4L15.7 2V2.8L7.4 3.6Z" fill="#d0b428"/><path d="M2.2 10.6L10 10.4L11.4 11.8L2.6 15.2L1.4 13.8Z" fill="#dd9a28"/><path d="M3 12.4L4 11.6L5 12.6L5.8 13.2L4.6 14L3.6 13.4Z" fill="#ffd820"/><path d="M11.2 7.6L13.2 6.2V8.4L11 8.7Z" fill="#ffff38"/></g></svg>
<svg style="left:55px;top:187px" width="16" height="16" viewBox="0 0 16 16"><g shape-rendering="auto"><path d="M0 1L15.8 1.4L15.2 10.4L2.4 15.3L0.9 14Z" fill="#e4a42a"/><path d="M0 1L15.8 1.4V2.8L0.4 2.6Z" fill="#c0b424"/><path d="M1.3 2.2H7.4V3.7H2.9V10.4H1.3Z" fill="#2a1a10"/><path d="M0.6 3L1.3 3V12L0.9 13Z" fill="#c88a20"/><path d="M2.9 3.7L15.6 2.7L15 10.3L2.9 10.6Z" fill="#ffcb2e"/><path d="M7.4 2.4L15.7 2V2.8L7.4 3.6Z" fill="#d0b428"/><path d="M2.2 10.6L10 10.4L11.4 11.8L2.6 15.2L1.4 13.8Z" fill="#dd9a28"/><path d="M3 12.4L4 11.6L5 12.6L5.8 13.2L4.6 14L3.6 13.4Z" fill="#ffd820"/><path d="M11.2 7.6L13.2 6.2V8.4L11 8.7Z" fill="#ffff38"/></g></svg>
<svg style="left:74px;top:140px" width="16" height="14" viewBox="0 0 16 14"><path d="M0.6 9.6V13.2H11.6L15.3 5.4V2.8L11.8 9.6Z" fill="#404040"/><g shape-rendering="auto"><path d="M4.2 2.8H15.3L11.8 9.6H0.6Z" fill="#fff" stroke="#000" stroke-width="1.1"/></g></svg>
<svg style="left:74px;top:156px" width="16" height="14" viewBox="0 0 16 14"><path d="M0.6 9.6V13.2H11.6L15.3 5.4V2.8L11.8 9.6Z" fill="#404040"/><g shape-rendering="auto"><path d="M4.2 2.8H15.3L11.8 9.6H0.6Z" fill="#ff00ff" stroke="#000" stroke-width=".5"/><path d="M0.9 3.2L8.4 7L0.9 10.8Z" fill="#00ff00" stroke="#000" stroke-width=".8"/></g></svg>
<div class="a" style="left:93px;top:155px;width:38px;height:16px;background:#3399ff;"></div>
<svg style="left:94px;top:172px" width="16" height="16" viewBox="0 0 16 16" shape-rendering="crispEdges"><rect x="1" y="1" width="14" height="14" fill="#000080"/><rect x="0" y="0" width="14" height="14" fill="#008000"/><g shape-rendering="auto"><g transform="translate(.8,.8)"><path d="M2.5 2.5H9.5Q11.5 2.5 11.5 4.5V6.5Q11.5 8.5 9 8.5H7.5V11.5H2.5Z" fill="none" stroke="#000" stroke-width="1.3" stroke-linejoin="round"/></g><path d="M2.5 2.5H9.5Q11.5 2.5 11.5 4.5V6.5Q11.5 8.5 9 8.5H7.5V11.5H2.5Z" fill="none" stroke="#fff" stroke-width="1.3" stroke-linejoin="round"/></g></svg>
<div class="a" style="left:8px;top:322px;width:251px;height:1px;background:#fff;"></div>
<div class="a" style="left:8px;top:323px;width:251px;height:3px;background:#f0f0f0;"></div>
<div class="a" style="left:8px;top:326px;width:251px;height:24px;background:linear-gradient(180deg,#fcfcfc 0,#f9f9f9 10px,#f0f0f0 24px);"></div>
<div class="a" style="left:13px;top:327px;width:23px;height:22px;background:#c2e0ff;box-sizing:border-box;border:1px solid #3399ff;"></div>
<svg style="left:13px;top:327px" width="23" height="22" viewBox="0 0 23 22" shape-rendering="crispEdges"><rect x="3.5" y="3.5" width="6" height="6" fill="#fff" stroke="#8a9098"/><rect x="5" y="6" width="3" height="1" fill="#000"/><rect x="6" y="5" width="1" height="3" fill="#000"/><rect x="3.5" y="12.5" width="6" height="6" fill="#fff" stroke="#8a9098"/><rect x="5" y="15" width="3" height="1" fill="#000"/><rect x="6" y="14" width="1" height="3" fill="#000"/><rect x="11" y="5" width="4" height="1" fill="#333"/><rect x="11" y="16" width="4" height="1" fill="#333"/><rect x="11" y="7" width="4" height="1" fill="#8a8cb0"/><rect x="16" y="7" width="3" height="1" fill="#9a90c0"/><rect x="11" y="9" width="4" height="1" fill="#8a8cb0"/><rect x="16" y="9" width="3" height="1" fill="#9a90c0"/><rect x="11" y="11" width="4" height="1" fill="#8a8cb0"/><rect x="16" y="11" width="3" height="1" fill="#9a90c0"/><rect x="11" y="13" width="4" height="1" fill="#8a8cb0"/><rect x="16" y="13" width="3" height="1" fill="#9a90c0"/><rect x="11" y="18" width="4" height="1" fill="#8a8cb0"/><rect x="16" y="18" width="3" height="1" fill="#9a90c0"/></svg>
<span class="t" style="left:45px;top:328px;font-family:'Liberation Serif',serif;font-weight:700;font-size:10px;line-height:10px;color:#2848c0">A</span>
<span class="t" style="left:45.5px;top:336px;font-family:'Liberation Serif',serif;font-weight:700;font-size:10px;line-height:10px;color:#a02838">Z</span>
<svg style="left:54px;top:330px" width="8" height="16" viewBox="0 0 8 16" shape-rendering="crispEdges"><rect x="3" y="0" width="1" height="14" fill="#000"/><path d="M1 11h5v1h-1v1h-1v1h-1v-1h-1v-1h-1z" fill="#000"/></svg>
<div class="a" style="left:136px;top:331px;width:1px;height:14px;background:#bdbdbd;"></div>
<div class="a" style="left:137px;top:331px;width:1px;height:14px;background:#fff;"></div>
<svg style="left:148px;top:330px" width="16" height="16" viewBox="0 0 16 16" shape-rendering="crispEdges"><rect x="1" y="1" width="14" height="14" fill="#000080"/><rect x="0" y="0" width="14" height="14" fill="#10c8c8"/><g shape-rendering="auto"><text x="4.6" y="12.2" font-family="Liberation Sans,sans-serif" font-weight="700" font-size="11" fill="#000">?</text><text x="3.8" y="11.4" font-family="Liberation Sans,sans-serif" font-weight="700" font-size="11" fill="#fff">?</text></g></svg>
<div class="a" style="left:8px;top:350px;width:251px;height:19px;background:#d7e4f2;"></div>
<div class="a" style="left:8px;top:369px;width:14px;height:103px;background:#d7e4f2;"></div>
<div class="a" style="left:22px;top:369px;width:237px;height:102px;background:#fff;"></div>
<div class="a" style="left:22px;top:386px;width:237px;height:1px;background:#d7e4f2;"></div>
<div class="a" style="left:22px;top:403px;width:237px;height:1px;background:#d7e4f2;"></div>
<div class="a" style="left:22px;top:420px;width:237px;height:1px;background:#d7e4f2;"></div>
<div class="a" style="left:22px;top:437px;width:237px;height:1px;background:#d7e4f2;"></div>
<div class="a" style="left:22px;top:454px;width:237px;height:1px;background:#d7e4f2;"></div>
<div class="a" style="left:22px;top:471px;width:237px;height:1px;background:#d7e4f2;"></div>
<div class="a" style="left:137px;top:369px;width:1px;height:102px;background:#d7e4f2;"></div>
<div class="a" style="left:22px;top:420px;width:115px;height:18px;background:#3399ff;"></div>
<div class="a" style="left:10px;top:355px;width:9px;height:9px;background:#fff;box-sizing:border-box;border:1px solid #808080;"></div>
<div class="a" style="left:12px;top:359px;width:5px;height:1px;background:#000;"></div>
<div class="a" style="left:140px;top:389px;width:20px;height:13px;background:#ff00ff;box-sizing:border-box;border:1px solid #000;"></div>
<div class="a" style="left:8px;top:472px;width:251px;height:266px;background:#fff;"></div>
<div class="a" style="left:8px;top:738px;width:251px;height:4px;background:#f0f0f0;"></div>
<div class="a" style="left:259px;top:79px;width:3px;height:663px;background:#a0a0a0;"></div>
<div class="a" style="left:262px;top:79px;width:754px;height:593px;background:#32323c;"></div>
<div class="a" style="left:262px;top:672px;width:754px;height:3px;background:#a0a0a0;"></div>
<div class="a" style="left:262px;top:675px;width:754px;height:65px;background:#fff;"></div>
<div class="a" style="left:262px;top:675px;width:754px;height:13px;background:#3399ff;"></div>
<div class="a" style="left:262px;top:368px;width:754px;height:1px;background:#fa0000;"></div>
<div class="a" style="left:637px;top:79px;width:1px;height:593px;background:#008000;"></div>
<svg style="left:0;top:0" width="1024" height="768" viewBox="0 0 1024 768"><path d="M638.3 175.6C636.8 173.7 632.5 167.8 629.3 164.1C626.1 160.4 622.7 156.8 619.1 153.4C615.6 150.0 611.8 146.8 608.0 143.7C604.1 140.6 600.1 137.7 595.9 134.9C591.8 132.2 587.5 129.6 583.1 127.2C578.8 124.9 574.3 122.7 569.8 120.8C565.2 118.8 560.6 117.1 555.9 115.6C551.2 114.1 546.4 112.8 541.7 111.8C536.9 110.7 532.0 109.9 527.2 109.4C522.4 108.9 517.5 108.6 512.7 108.6C507.8 108.6 503.0 108.9 498.2 109.5C493.4 110.1 488.6 110.9 483.8 112.0C479.1 113.0 474.4 114.4 469.8 115.9C465.2 117.5 460.6 119.3 456.2 121.3C451.7 123.4 447.3 125.6 443.1 128.1C438.8 130.5 434.6 133.2 430.6 136.0C426.6 138.9 422.7 141.9 418.9 145.1C415.2 148.3 411.6 151.8 408.1 155.3C404.7 158.8 401.4 162.6 398.3 166.4C395.3 170.3 392.3 174.3 389.6 178.4C386.8 182.5 384.3 186.7 381.9 191.1C379.5 195.4 377.3 199.9 375.3 204.4C373.3 208.9 371.4 213.5 369.8 218.2C368.2 222.9 366.7 227.6 365.5 232.4C364.2 237.2 363.1 242.0 362.3 246.9C361.4 251.7 360.8 256.6 360.3 261.5C359.9 266.4 359.7 271.3 359.6 276.2C359.6 281.1 359.8 286.0 360.2 290.8C360.6 295.7 361.2 300.5 362.1 305.3C362.9 310.1 363.9 314.8 365.2 319.4C366.5 324.1 368.0 328.7 369.8 333.2C371.5 337.7 373.5 342.1 375.6 346.5C377.8 350.8 380.1 355.1 382.6 359.3C385.1 363.5 387.8 367.6 390.6 371.7C393.4 375.7 396.3 379.7 399.3 383.7C402.3 387.6 405.4 391.5 408.6 395.3C411.8 399.1 415.0 402.9 418.3 406.6C421.6 410.3 424.9 414.0 428.2 417.6C431.6 421.2 435.0 424.8 438.4 428.3C441.8 431.8 445.2 435.3 448.6 438.8C452.1 442.3 455.6 445.7 459.1 449.2C462.5 452.6 466.1 456.0 469.6 459.4C473.1 462.8 476.6 466.2 480.2 469.5C483.7 472.9 487.2 476.3 490.8 479.7C494.3 483.0 497.9 486.4 501.4 489.8C505.0 493.2 508.5 496.6 512.0 500.0C515.6 503.4 519.1 506.8 522.6 510.2C526.2 513.6 529.7 517.0 533.2 520.5C536.7 523.9 540.2 527.4 543.7 530.9C547.1 534.3 550.6 537.8 554.1 541.3C557.5 544.8 561.0 548.3 564.4 551.8C567.8 555.4 571.2 558.9 574.6 562.5C578.0 566.0 581.4 569.6 584.8 573.2C588.1 576.8 591.4 580.4 594.7 584.0C598.0 587.6 601.3 591.3 604.6 594.9C607.8 598.6 611.0 602.3 614.2 606.1C617.3 609.8 620.4 613.6 623.3 617.5C626.2 621.4 629.1 625.4 631.7 629.4C634.4 633.5 638.0 639.9 639.3 642.0" fill="none" stroke="#ff00ff" stroke-width="2.05" stroke-linecap="round" stroke-linejoin="round"/><path d="M639.3 642.0C641.0 640.2 646.1 634.9 649.4 631.2C652.6 627.5 655.7 623.6 658.7 619.8C661.7 615.9 664.6 611.9 667.5 607.9C670.4 603.9 673.2 599.9 676.1 595.9C679.0 591.8 681.8 587.8 684.7 583.9C687.6 579.9 690.6 576.0 693.7 572.1C696.7 568.3 699.9 564.6 703.2 560.9C706.4 557.2 709.8 553.7 713.3 550.2C716.7 546.6 720.2 543.2 723.7 539.8C727.2 536.4 730.8 533.0 734.4 529.6C737.9 526.2 741.5 522.8 745.1 519.4C748.6 516.0 752.2 512.7 755.7 509.3C759.3 505.9 762.8 502.5 766.3 499.1C769.9 495.7 773.4 492.3 777.0 489.0C780.5 485.6 784.1 482.2 787.6 478.8C791.1 475.4 794.7 472.0 798.2 468.6C801.8 465.2 805.4 461.8 808.9 458.4C812.5 455.0 816.0 451.6 819.6 448.2C823.2 444.8 826.8 441.4 830.4 438.0C833.9 434.6 837.5 431.2 841.1 427.7C844.6 424.3 848.2 420.8 851.6 417.3C855.1 413.8 858.5 410.2 861.8 406.6C865.2 403.0 868.5 399.3 871.6 395.6C874.7 391.8 877.8 388.0 880.7 384.1C883.7 380.2 886.5 376.2 889.1 372.1C891.7 368.0 894.2 363.8 896.6 359.5C898.9 355.1 901.0 350.7 903.0 346.2C905.0 341.7 906.8 337.2 908.4 332.5C910.1 327.9 911.5 323.2 912.7 318.4C914.0 313.6 915.1 308.8 915.9 304.0C916.8 299.1 917.5 294.2 917.9 289.3C918.4 284.4 918.6 279.4 918.7 274.5C918.7 269.6 918.6 264.6 918.2 259.7C917.8 254.8 917.3 249.9 916.5 245.0C915.7 240.2 914.7 235.4 913.4 230.6C912.2 225.9 910.8 221.1 909.1 216.5C907.5 211.9 905.6 207.4 903.6 202.9C901.5 198.5 899.2 194.2 896.7 189.9C894.3 185.7 891.6 181.6 888.8 177.6C885.9 173.6 882.9 169.7 879.7 165.9C876.5 162.2 873.2 158.5 869.7 155.1C866.2 151.6 862.5 148.3 858.7 145.1C854.9 142.0 850.9 139.0 846.9 136.1C842.8 133.3 838.6 130.7 834.3 128.2C830.0 125.7 825.5 123.5 821.0 121.4C816.5 119.3 811.9 117.5 807.3 115.8C802.6 114.2 797.9 112.8 793.1 111.7C788.4 110.5 783.5 109.6 778.7 108.9C773.9 108.3 769.0 107.9 764.2 107.8C759.3 107.7 754.5 107.8 749.7 108.3C744.9 108.8 740.1 109.6 735.3 110.6C730.6 111.7 725.9 113.1 721.3 114.8C716.6 116.4 712.1 118.4 707.6 120.6C703.1 122.7 698.7 125.1 694.3 127.7C690.0 130.3 685.8 133.1 681.7 136.0C677.6 138.9 673.5 142.0 669.7 145.1C665.8 148.3 662.0 151.6 658.4 154.9C654.7 158.3 651.2 161.7 647.9 165.2C644.5 168.6 639.9 173.9 638.3 175.6" fill="none" stroke="#ff00ff" stroke-width="2.05" stroke-linecap="round" stroke-linejoin="round"/></svg>
<div class="a" style="left:8px;top:740px;width:1008px;height:20px;background:#f0f0f0;"></div>
<div class="a" style="left:8px;top:742px;width:641px;height:1px;background:#a0a0a0;"></div>
<div class="a" style="left:649px;top:742px;width:1px;height:18px;background:#fff;"></div>
<div class="a" style="left:652px;top:742px;width:197px;height:1px;background:#a0a0a0;"></div>
<div class="a" style="left:652px;top:742px;width:1px;height:17px;background:#a0a0a0;"></div>
<div class="a" style="left:849px;top:742px;width:1px;height:18px;background:#fff;"></div>
<div class="a" style="left:852px;top:742px;width:148px;height:1px;background:#a0a0a0;"></div>
<div class="a" style="left:852px;top:742px;width:1px;height:17px;background:#a0a0a0;"></div>
<div class="a" style="left:1000px;top:742px;width:1px;height:18px;background:#fff;"></div>
<div class="a" style="left:8px;top:759px;width:993px;height:1px;background:#fff;"></div>
<svg style="left:1003px;top:746px" width="13" height="13" viewBox="0 0 13 13"><g shape-rendering="auto"><path d="M12 1L1 12M12 5L5 12M12 9L9 12" stroke="#b8b8b8" stroke-width="1.2"/><path d="M12.8 1.8L1.8 12.8M12.8 5.8L5.8 12.8M12.8 9.8L9.8 12.8" stroke="#fff" stroke-width="1"/></g></svg>
<svg style="left:8px;top:7px" width="16" height="16" viewBox="0 0 16 16"><rect x="0" y="0" width="16" height="16" fill="#000"/><g shape-rendering="auto"><path d="M0.8 9.6C0.6 6.6 3 4.6 5.6 3.2C8 1.9 10.6 0.8 12.4 1.2C14.4 1.6 15 3.4 14.2 5.2C13.2 7.4 11.8 9.2 10.2 11.2C8.8 13 7 14.6 5 14.4C2.6 14.2 1 12 0.8 9.6Z" fill="#ffff00"/><circle cx="5.9" cy="8.9" r="1.35" fill="#000"/><path d="M12.6 10.6L14.8 12.8L12.6 15L10.6 12.8Z" fill="#ffff00"/></g></svg>
<span class="t" style="left:29.40px;top:7px;font-size:12px;line-height:16px;color:#000;letter-spacing:-0.555px;">CamBam+</span>
<span class="t" style="left:92.30px;top:7px;font-size:12px;line-height:16px;color:#000;letter-spacing:-0.215px;">heart</span>
<span class="t" style="left:24.00px;top:34px;font-size:12px;line-height:16px;color:#000;letter-spacing:-0.448px;">File</span>
<span class="t" style="left:61.30px;top:34px;font-size:12px;line-height:16px;color:#000;letter-spacing:-0.366px;">View</span>
<span class="t" style="left:105.60px;top:34px;font-size:12px;line-height:16px;color:#000;letter-spacing:-0.429px;">Edit</span>
<span class="t" style="left:144.40px;top:34px;font-size:12px;line-height:16px;color:#000;letter-spacing:-0.605px;">Draw</span>
<span class="t" style="left:190.30px;top:34px;font-size:12px;line-height:16px;color:#000;letter-spacing:0.250px;">Machining</span>
<span class="t" style="left:266.00px;top:34px;font-size:12px;line-height:16px;color:#000;letter-spacing:-0.138px;">Script</span>
<span class="t" style="left:315.30px;top:34px;font-size:12px;line-height:16px;color:#000;letter-spacing:-0.177px;">Plugins</span>
<span class="t" style="left:373.30px;top:34px;font-size:12px;line-height:16px;color:#000;letter-spacing:0.096px;">Tools</span>
<span class="t" style="left:421.40px;top:34px;font-size:12px;line-height:16px;color:#000;letter-spacing:0.431px;">Toolkit</span>
<span class="t" style="left:477.60px;top:34px;font-size:12px;line-height:16px;color:#000;letter-spacing:-0.329px;">Help</span>
<span class="t" style="left:93.50px;top:58px;font-size:12px;line-height:16px;color:#000;font-weight:700;letter-spacing:-0.375px;">Units</span>
<span class="t" style="left:131.80px;top:59px;font-size:12px;line-height:16px;color:#000;letter-spacing:0.036px;">Millimeters</span>
<span class="t" style="left:38.70px;top:83px;font-size:11px;line-height:15px;color:#000;letter-spacing:-0.477px;">Drawing</span>
<span class="t" style="left:111.50px;top:85px;font-size:11px;line-height:15px;color:#000;letter-spacing:-0.877px;">System</span>
<span class="t" style="left:56.80px;top:108px;font-size:11px;line-height:15px;color:#000;letter-spacing:-0.520px;">heart</span>
<span class="t" style="left:76.60px;top:124px;font-size:11px;line-height:15px;color:#000;letter-spacing:-0.726px;">Layers</span>
<span class="t" style="left:95.40px;top:140px;font-size:11px;line-height:15px;color:#000;">0</span>
<span class="t" style="left:95.50px;top:156px;font-size:11px;line-height:15px;color:#fff;letter-spacing:-0.393px;">Default</span>
<span class="t" style="left:114.50px;top:172px;font-size:11px;line-height:15px;color:#000;letter-spacing:-0.430px;">Polyline (1)</span>
<span class="t" style="left:76.50px;top:188px;font-size:11px;line-height:15px;color:#000;letter-spacing:-0.330px;">Machining</span>
<span class="t" style="left:74.30px;top:330px;font-size:12px;line-height:16px;color:#000;letter-spacing:-0.154px;">Advanced</span>
<span class="t" style="left:24.30px;top:352px;font-size:11px;line-height:15px;color:#6d6d6d;letter-spacing:0.029px;">(General)</span>
<span class="t" style="left:24.30px;top:371px;font-size:11px;line-height:15px;color:#000;letter-spacing:-0.185px;">Alpha</span>
<span class="t" style="left:141.00px;top:371px;font-size:11px;line-height:15px;color:#000;">1</span>
<span class="t" style="left:24.30px;top:388px;font-size:11px;line-height:15px;color:#000;letter-spacing:0.051px;">Color</span>
<span class="t" style="left:24.30px;top:405px;font-size:11px;line-height:15px;color:#000;letter-spacing:-0.315px;">Name</span>
<span class="t" style="left:140.60px;top:405px;font-size:11px;line-height:15px;color:#000;letter-spacing:-0.443px;">Default</span>
<span class="t" style="left:24.30px;top:422px;font-size:11px;line-height:15px;color:#fff;letter-spacing:-0.131px;">Pen Width</span>
<span class="t" style="left:140.30px;top:422px;font-size:11px;line-height:15px;color:#000;">2</span>
<span class="t" style="left:24.30px;top:439px;font-size:11px;line-height:15px;color:#000;letter-spacing:0.175px;">Tag</span>
<span class="t" style="left:24.30px;top:456px;font-size:11px;line-height:15px;color:#000;letter-spacing:0.180px;">Visible</span>
<span class="t" style="left:140.60px;top:456px;font-size:11px;line-height:15px;color:#000;letter-spacing:-0.440px;">True</span>
<span class="t" style="left:164.80px;top:388px;font-size:11px;line-height:15px;color:#000;letter-spacing:-0.622px;">Fuchsia</span>
<span class="t" style="left:264.00px;top:675px;font-size:11px;line-height:15px;color:#fff;letter-spacing:-0.102px;">3 sections read from C:\CamBam\art\screenshots\0.9.8\heart.dxf</span>
<span class="t" style="left:654.40px;top:744px;font-size:11px;line-height:15px;color:#000;letter-spacing:-0.283px;">Property changed</span>
<span class="t" style="left:911.00px;top:744px;font-size:11px;line-height:15px;color:#000;letter-spacing:-0.176px;">-10.0000, 19.0000</span>
</body></html>
